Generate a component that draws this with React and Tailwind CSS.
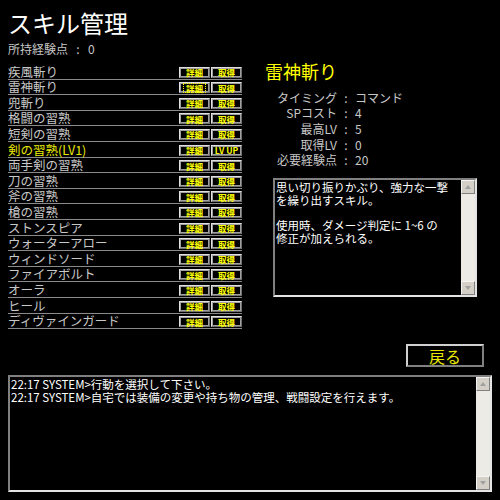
import React from 'react';

const skills = [
  { name: '疾風斬り' },
  { name: '雷神斬り', focused: true },
  { name: '兜斬り' },
  { name: '格闘の習熟' },
  { name: '短剣の習熟' },
  { name: '剣の習熟(LV1)', learned: true },
  { name: '両手剣の習熟' },
  { name: '刀の習熟' },
  { name: '斧の習熟' },
  { name: '槍の習熟' },
  { name: 'ストンスピア' },
  { name: 'ウォーターアロー' },
  { name: 'ウィンドソード' },
  { name: 'ファイアボルト' },
  { name: 'オーラ' },
  { name: 'ヒール' },
  { name: 'ディヴァインガード' },
];

const details = [
  ['タイミング', 'コマンド'],
  ['SPコスト', '4'],
  ['最高LV', '5'],
  ['取得LV', '0'],
  ['必要経験点', '20'],
];

const SmallButton = ({ label, focused }) => (
  <div className="w-[31px] h-[11px] flex items-center justify-center bg-black border border-t-[#e0e0e0] border-l-[#e0e0e0] border-b-[#707070] border-r-[#707070] shadow-[inset_-1px_-1px_0_#a0a0a0,inset_1px_1px_0_#a0a0a0]">
    <span className={`text-[8.5px] leading-[8px] font-bold text-[#ffff00] px-[2px] ${focused ? 'outline outline-1 outline-dotted outline-[#ffff00]' : ''}`}>
      {label}
    </span>
  </div>
);

const ScrollBar = () => (
  <div className="w-[14px] flex flex-col bg-[#ecebe6]">
    <div className="h-[14px] bg-[#d4d0c8] border border-t-[#f4f4f4] border-l-[#f4f4f4] border-b-[#808080] border-r-[#808080] flex items-center justify-center">
      <svg width="6" height="4" viewBox="0 0 6 4"><path d="M3 0L6 4H0z" fill="#a0a0a0" /></svg>
    </div>
    <div className="flex-1" />
    <div className="h-[14px] bg-[#d4d0c8] border border-t-[#f4f4f4] border-l-[#f4f4f4] border-b-[#808080] border-r-[#808080] flex items-center justify-center">
      <svg width="6" height="4" viewBox="0 0 6 4"><path d="M0 0H6L3 4z" fill="#a0a0a0" /></svg>
    </div>
  </div>
);

const SkillRow = ({ skill }) => (
  <div className="h-[15.6px] flex items-end justify-between border-b border-[#8a8a8a]">
    <span className={`text-[12.5px] leading-[14px] whitespace-nowrap ${skill.learned ? 'text-[#e8e800]' : 'text-[#c8c8c8]'}`}>
      {skill.name}
    </span>
    <div className="flex gap-[1px] mb-[1px]">
      <SmallButton label="詳細" focused={skill.focused} />
      <SmallButton label={skill.learned ? 'LV UP' : '取得'} />
    </div>
  </div>
);

export default function App() {
  return (
    <div className="w-[500px] h-[500px] bg-black text-[#c8c8c8] overflow-hidden" style={{ fontFamily: '"Noto Sans CJK JP", "Liberation Sans", sans-serif' }}>
      <div className="px-2">
        <h1 className="pt-[8px] text-[24px] leading-[30px] text-white">スキル管理</h1>
        <p className="mt-[4px] text-[12px] leading-[14px] flex">
          <span>所持経験点</span>
          <span className="w-[20px] text-center">:</span>
          <span>0</span>
        </p>
      </div>

      <div className="flex mt-[8px]">
        <div className="ml-2 w-[234px]">
          {skills.map((s) => (
            <SkillRow key={s.name} skill={s} />
          ))}
        </div>

        <div className="ml-[23px] w-[212px] -mt-[4px]">
          <h2 className="text-[18px] leading-[22px] text-[#ffff00]">雷神斬り</h2>
          <div className="mt-[8px] text-[12px]">
            {details.map(([k, v]) => (
              <div key={k} className="h-[15.6px] flex items-center leading-[14px]">
                <span className="w-[72px] text-right">{k}</span>
                <span className="w-[18px] text-center">:</span>
                <span>{v}</span>
              </div>
            ))}
          </div>
          <div className="mt-[10px] ml-[8px] w-[204px] h-[119px] flex border-2 border-t-[#808080] border-l-[#808080] border-b-[#e4e4e4] border-r-[#e4e4e4]">
            <div className="flex-1 bg-black text-white text-[11.5px] leading-[13px] px-[1px] pt-[1px] whitespace-nowrap">
              <p>思い切り振りかぶり、強力な一撃<br />を繰り出すスキル。</p>
              <p className="mt-[12px]">使用時、ダメージ判定に 1~6 の<br />修正が加えられる。</p>
            </div>
            <ScrollBar />
          </div>
        </div>
      </div>

      <div className="flex justify-end pr-[16px] mt-[15px]">
        <div className="w-[78px] h-[23px] flex items-center justify-center bg-black border-2 border-t-[#d0d0d0] border-l-[#d0d0d0] border-b-[#808080] border-r-[#808080]">
          <span className="text-[16px] leading-[18px] text-[#e8e800]">戻る</span>
        </div>
      </div>

      <div className="mt-[8px] ml-2 w-[484px] h-[117px] flex border-2 border-t-[#808080] border-l-[#808080] border-b-[#e4e4e4] border-r-[#e4e4e4]">
        <div className="flex-1 bg-black text-white text-[11.5px] leading-[13px] px-[1px] pt-[1px]">
          <p>22:17 SYSTEM&gt;行動を選択して下さい。</p>
          <p>22:17 SYSTEM&gt;自宅では装備の変更や持ち物の管理、戦闘設定を行えます。</p>
        </div>
        <ScrollBar />
      </div>
    </div>
  );
}
